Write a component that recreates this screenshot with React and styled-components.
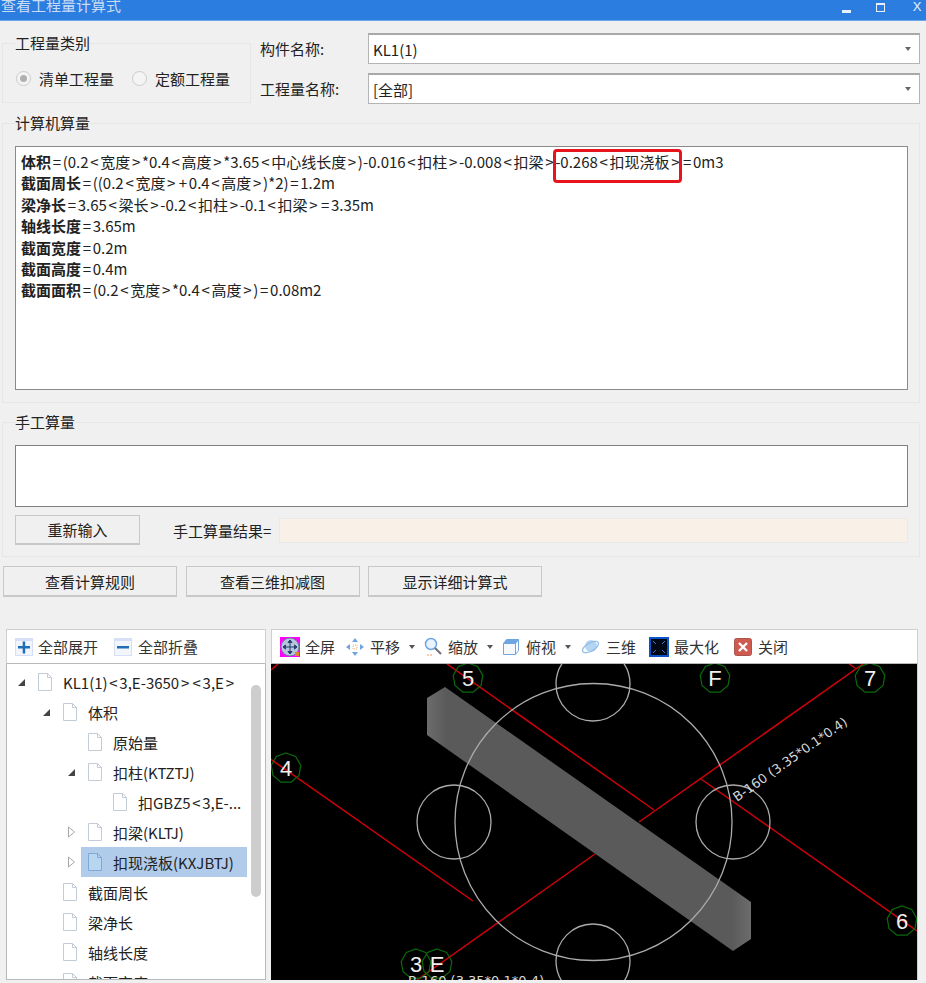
import styled, { createGlobalStyle } from "styled-components";

const GlobalStyle = createGlobalStyle`
html, body {
    margin: 0;
    padding: 0;
    background: #f0f0f0;
}
* {
    box-sizing: border-box;
}
`

const Window = styled.div`
width: 926px;
height: 983px;
overflow: hidden;
display: flex;
flex-direction: column;
background: #f0f0f0;
color: #222222;
font-family: "Noto Sans CJK SC", "Liberation Sans", sans-serif;
font-size: 15px;
`

const TitleBar = styled.div`
height: 21px;
flex: none;
display: flex;
align-items: center;
justify-content: space-between;
background: #2b7de0;
border-bottom: 1px solid #6aa6ea;
color: #c9dcf5;
overflow: hidden;
`

const TitleText = styled.span`
margin: -10px 0 0 1px;
font-size: 15px;
line-height: 20px;
`

const WinControls = styled.div`
display: flex;
align-items: center;
gap: 22px;
margin: -6px 3px 0 0;
`

const WinBtn = styled.span`
width: 12px;
display: flex;
justify-content: center;
margin-left: ${(p) => p.$shift ?? 0}px;
color: #e8f1fb;
font-family: "Liberation Sans", sans-serif;
font-size: 13px;
line-height: 14px;
`

const MinBar = styled.i`
width: 9px;
height: 3px;
margin-top: 9px;
background: #e8f1fb;
`

const MaxBox = styled.i`
width: 9px;
height: 9px;
border: 1px solid #e8f1fb;
border-top-width: 2px;
`

const TopRow = styled.div`
display: flex;
margin: 12px 0 0 2px;
gap: 9px;
`

const Group = styled.fieldset`
margin: ${(p) => p.$offset ?? 0}px 0 0 0;
min-width: 0;
width: ${(p) => p.$width}px;
height: ${(p) => p.$height}px;
padding: ${(p) => p.$top}px 11px 0 12px;
border: 1px solid #e6e6e6;
`

const Legend = styled.legend`
padding: 0;
margin-left: 0;
height: 20px;
line-height: 20px;
font-size: 15px;
`

const RadioRow = styled.div`
display: flex;
align-items: center;
margin-top: 15px;
white-space: nowrap;
`

const Radio = styled.span`
width: 15px;
height: 15px;
flex: none;
border-radius: 50%;
border: 1px solid #cccccc;
background: #f4f4f4;
display: flex;
align-items: center;
justify-content: center;
margin-left: ${(p) => p.$gap}px;
margin-right: 8px;
&::after {
    content: "";
    width: 7px;
    height: 7px;
    border-radius: 50%;
    background: ${(p) => (p.$on ? "#b0b0b0" : "transparent")};
}
`

const Form = styled.div`
flex: 1;
display: flex;
flex-direction: column;
gap: 9px;
margin-right: 6px;
`

const FormRow = styled.div`
display: flex;
align-items: center;
`

const FormLabel = styled.label`
width: 108px;
flex: none;
`

const Select = styled.div`
flex: 1;
height: 31px;
display: flex;
align-items: center;
justify-content: space-between;
padding: 0 8px 0 4px;
background: #ffffff;
border: 1px solid #b4b4b4;
border-top: 2px solid #a8a8a8;
&::after {
    content: "";
    border-left: 3px solid transparent;
    border-right: 3px solid transparent;
    border-top: 4px solid #666666;
}
`

const Stack = styled.div`
display: flex;
flex-direction: column;
margin-left: 2px;
`

const Formula = styled.div`
height: 244px;
padding: 4px 5px;
background: #ffffff;
border: 1px solid #8a8a8a;
line-height: 21.4px;
font-size: 15px;
white-space: nowrap;
b {
    font-weight: 700;
}
`

const Angle = styled.span`
padding: 0 1.7px;
`

const Mark = styled.span`
position: relative;
&::after {
    content: "";
    position: absolute;
    left: -2px;
    right: -1px;
    top: -2px;
    bottom: -11px;
    border: 3px solid #e8141c;
    border-radius: 4px;
}
`

const ManualBox = styled.div`
height: 62px;
background: #ffffff;
border: 1px solid #808080;
`

const ManualRow = styled.div`
display: flex;
align-items: center;
margin-top: 8px;
`

const Button = styled.button`
width: ${(p) => p.$width}px;
height: ${(p) => p.$height}px;
flex: none;
padding: 0;
background: #f0f0f0;
border: 1px solid #c8c8c8;
border-bottom-width: 2px;
color: #222222;
font: inherit;
`

const ResultLabel = styled.span`
margin: 0 8px 0 33px;
white-space: nowrap;
`

const ResultField = styled.div`
flex: 1;
height: 25px;
background: #f9f0e7;
border: 1px solid #e9e9e9;
`

const ActionRow = styled.div`
display: flex;
gap: 8.5px;
margin: 9px 0 0 3px;
`

const Lower = styled.div`
display: flex;
gap: 5px;
margin: 32px 0 0 6px;
height: 351px;
`

const Panel = styled.div`
width: ${(p) => p.$width}px;
flex: none;
display: flex;
flex-direction: column;
`

const Toolbar = styled.div`
height: 35px;
flex: none;
display: flex;
align-items: center;
padding-left: ${(p) => p.$pad}px;
background: #ffffff;
border: 1px solid #d0d0d0;
border-bottom-color: #b8b8b8;
`

const ToolItem = styled.span`
display: flex;
align-items: center;
gap: ${(p) => p.$gap ?? 6}px;
margin-right: ${(p) => p.$after ?? 11}px;
color: #333333;
white-space: nowrap;
`

const Caret = styled.i`
width: 0;
height: 0;
margin-left: 3px;
border-left: 3px solid transparent;
border-right: 3px solid transparent;
border-top: 4px solid #555555;
`

const Tree = styled.div`
position: relative;
flex: 1;
overflow: hidden;
padding-top: 3px;
background: #ffffff;
border: 1px solid #b8b8b8;
border-top: 0;
`

const Row = styled.div`
height: 30px;
display: flex;
align-items: center;
margin-left: ${(p) => 4 + p.$depth * 25}px;
margin-right: 18px;
`

const Toggle = styled.span`
width: 20px;
flex: none;
display: flex;
justify-content: center;
`

const RowBody = styled.div`
flex: 1;
height: 100%;
min-width: 0;
display: flex;
align-items: center;
gap: 10px;
padding-left: 6px;
background: ${(p) => (p.$selected ? "#b1cceb" : "transparent")};
white-space: nowrap;
`

const ScrollThumb = styled.div`
position: absolute;
top: 21px;
right: 4px;
width: 10px;
height: 212px;
border-radius: 5px;
background: #cdcdcd;
`

const Canvas = styled.div`
flex: 1;
background: #000000;
overflow: hidden;
border-right: 1px solid #d0d0d0;
svg {
    display: block;
}
`

function FileIcon({ selected }) {
    return (
        <svg width="16" height="20" viewBox="0 0 16 20" style={{ flex: "none" }}>
            <path d="M1.5 1.5h9l4 4v13h-13z" fill={selected ? "#b9d6f0" : "#ffffff"} stroke={selected ? "#7fa9d3" : "#c3ccd6"} />
            <path d="M10.5 1.5v4h4" fill="none" stroke={selected ? "#7fa9d3" : "#c3ccd6"} />
        </svg>
    )
}

function TreeToggle({ kind }) {
    if (kind === "open") {
        return <svg width="9" height="9" viewBox="0 0 9 9"><path d="M8 1v7H1z" fill="#444444" /></svg>
    }
    if (kind === "closed") {
        return <svg width="9" height="12" viewBox="0 0 9 12"><path d="M1.5 1l6 5-6 5z" fill="#ffffff" stroke="#a8a8a8" /></svg>
    }
    return null
}

function PlusIcon({ minus }) {
    return (
        <svg width="18" height="18" viewBox="0 0 18 18">
            <rect width="18" height="18" fill="#d6dff5" />
            <rect x="1" y="3" width="16" height="14" fill="#f2f5fc" />
            <rect x="3" y="8" width="12" height="2.5" fill="#1f6fb8" />
            {!minus && <rect x="7.7" y="3.5" width="2.5" height="12" fill="#1f6fb8" />}
        </svg>
    )
}

function FullIcon() {
    return (
        <svg width="20" height="20" viewBox="0 0 20 20">
            <rect width="20" height="20" fill="#ff00ff" />
            <circle cx="10" cy="10" r="9" fill="#b7c6dc" stroke="#6c7f9c" />
            <path d="M10 3v14M3 10h14M10 3l-2 2.5h4zM10 17l-2-2.5h4zM3 10l2.5-2v4zM17 10l-2.5-2v4z" stroke="#24406b" fill="#24406b" strokeWidth="1" />
            <rect x="15" y="15" width="4" height="4" fill="#d98a2b" />
        </svg>
    )
}

function MoveIcon() {
    return (
        <svg width="18" height="18" viewBox="0 0 18 18" fill="#6ea6e2">
            <path d="M9 0l3 4H6zM9 18l-3-4h6zM0 9l4-3v6zM18 9l-4 3V6z" />
            <rect x="7" y="7" width="4" height="4" fill="#fff" stroke="#e8b27a" strokeDasharray="1 1" />
        </svg>
    )
}

function ZoomIcon() {
    return (
        <svg width="18" height="20" viewBox="0 0 18 20" fill="none">
            <circle cx="7" cy="7" r="5.5" fill="#e8f3fc" stroke="#6ea6e2" strokeWidth="1.5" />
            <path d="M11 11l6 6" stroke="#6d6d6d" strokeWidth="2" />
            <path d="M3 18h6" stroke="#e89a6a" strokeDasharray="2 1" />
        </svg>
    )
}

function CubeIcon() {
    return (
        <svg width="18" height="18" viewBox="0 0 18 18" fill="none" stroke="#6ea6e2">
            <path d="M1.5 5.5h12v11h-12z" fill="#f5f9fd" />
            <path d="M1.5 5.5l3-4h12l-3 4z" fill="#6ea6e2" />
            <path d="M13.5 16.5l3-4v-11" />
        </svg>
    )
}

function OrbitIcon() {
    return (
        <svg width="19" height="18" viewBox="0 0 19 18">
            <circle cx="10" cy="8" r="6" fill="#b6d5f3" />
            <ellipse cx="9.5" cy="9" rx="9" ry="4" fill="none" stroke="#8fbce8" strokeWidth="1.3" transform="rotate(-30 9.5 9)" />
        </svg>
    )
}

function MaxIcon() {
    return (
        <svg width="20" height="20" viewBox="0 0 20 20">
            <rect x="1" y="1" width="18" height="18" fill="#000814" stroke="#0a54c8" strokeWidth="2" />
            <path d="M4 4l3 3M16 4l-3 3M4 16l3-3M16 16l-3-3" stroke="#2a7fe0" />
        </svg>
    )
}

function CloseIcon() {
    return (
        <svg width="18" height="18" viewBox="0 0 18 18">
            <rect x=".5" y=".5" width="17" height="17" rx="2" fill="#cf5a50" stroke="#a8554d" />
            <path d="M5 5l8 8M13 5l-8 8" stroke="#ffffff" strokeWidth="2.4" />
        </svg>
    )
}

function nonagon(cx, cy, r) {
    const pts = []
    for (let i = 0; i < 9; i++) {
        const a = (i / 9) * Math.PI * 2 - Math.PI / 2
        pts.push(`${(cx + r * Math.cos(a)).toFixed(1)},${(cy + r * Math.sin(a)).toFixed(1)}`)
    }
    return pts.join(" ")
}

// wide < > = + like the original font
function spaced(text) {
    return text.split(/([<>=+])/).map((part, i) =>
        /^[<>=+]$/.test(part) ? <Angle key={i}>{part}</Angle> : part
    )
}

const redLines = [
    [272, 670, 279, 664],
    [448, 664, 655, 810],
    [270, 758, 474, 901],
    [418, 980, 596, 854],
    [640, 822, 864, 664],
    [702, 779, 918, 931],
    [850, 664, 856, 668],
]

const grayCircles = [
    [594, 684, 37],
    [455, 822, 37],
    [734, 822, 37],
    [594, 961, 37],
    [594.5, 822, 138.5],
]

const axisMarks = [
    ["5", 469, 678],
    ["F", 716, 678],
    ["7", 871, 678],
    ["4", 287, 768],
    ["6", 903, 921],
    ["3", 417, 964],
    ["E", 438, 964],
]

function Drawing() {
    return (
        <svg width="646" height="316" viewBox="272 664 646 316">
            <defs>
                <linearGradient id="beam" gradientUnits="userSpaceOnUse" x1="428" y1="0" x2="752" y2="0">
                    <stop offset="0" stopColor="#6c6c6c" />
                    <stop offset="0.06" stopColor="#5a5a5a" />
                    <stop offset="0.94" stopColor="#5a5a5a" />
                    <stop offset="1" stopColor="#6c6c6c" />
                </linearGradient>
            </defs>
            {redLines.map((l, i) => (
                <line key={i} x1={l[0]} y1={l[1]} x2={l[2]} y2={l[3]} stroke="#d0000a" strokeWidth="1.5" />
            ))}
            <polygon points="446,687 428,698 428,735 734,951 752,939 752,902" fill="url(#beam)" />
            {grayCircles.map((c, i) => (
                <circle key={i} cx={c[0]} cy={c[1]} r={c[2]} fill="none" stroke="#ababab" strokeWidth="1.3" />
            ))}
            {axisMarks.map(([label, x, y]) => (
                <g key={label}>
                    <polygon points={nonagon(x, y, 15)} fill="none" stroke="#0b6b0b" strokeWidth="1.2" />
                    <text x={x} y={y + 8} textAnchor="middle" fill="#f0f0f0" fontFamily="Liberation Sans, sans-serif" fontSize="22">{label}</text>
                </g>
            ))}
            <text x="738" y="802" transform="rotate(-35 738 802)" fill="#d8d8d8" fontFamily="DejaVu Sans, sans-serif" fontSize="13">B-160 (3.35*0.1*0.4)</text>
            <text x="409" y="985" fill="#d8d8d8" fontFamily="DejaVu Sans, sans-serif" fontSize="13">B-160 (3.35*0.1*0.4)</text>
        </svg>
    )
}

const formulaLines = [
    ["截面周长", "=((0.2<宽度>+0.4<高度>)*2)=1.2m"],
    ["梁净长", "=3.65<梁长>-0.2<扣柱>-0.1<扣梁>=3.35m"],
    ["轴线长度", "=3.65m"],
    ["截面宽度", "=0.2m"],
    ["截面高度", "=0.4m"],
    ["截面面积", "=(0.2<宽度>*0.4<高度>)=0.08m2"],
]

const treeRows = [
    { depth: 0, toggle: "open", label: "KL1(1)<3,E-3650><3,E>" },
    { depth: 1, toggle: "open", label: "体积" },
    { depth: 2, label: "原始量" },
    { depth: 2, toggle: "open", label: "扣柱(KTZTJ)" },
    { depth: 3, label: "扣GBZ5<3,E-..." },
    { depth: 2, toggle: "closed", label: "扣梁(KLTJ)" },
    { depth: 2, toggle: "closed", label: "扣现浇板(KXJBTJ)", selected: true },
    { depth: 1, label: "截面周长" },
    { depth: 1, label: "梁净长" },
    { depth: 1, label: "轴线长度" },
    { depth: 1, label: "截面宽度" },
]

export default function App() {
    return (
        <Window>
            <GlobalStyle />
            <TitleBar>
                <TitleText>查看工程量计算式</TitleText>
                <WinControls>
                    <WinBtn><MinBar /></WinBtn>
                    <WinBtn><MaxBox /></WinBtn>
                    <WinBtn $shift={3}>X</WinBtn>
                </WinControls>
            </TitleBar>

            <TopRow>
                <Group $width={249} $height={70} $top={0}>
                    <Legend>工程量类别</Legend>
                    <RadioRow>
                        <Radio $on $gap={1} />清单工程量
                        <Radio $gap={18} />定额工程量
                    </RadioRow>
                </Group>
                <Form>
                    <FormRow>
                        <FormLabel>构件名称:</FormLabel>
                        <Select>KL1(1)</Select>
                    </FormRow>
                    <FormRow>
                        <FormLabel>工程量名称:</FormLabel>
                        <Select>[全部]</Select>
                    </FormRow>
                </Form>
            </TopRow>

            <Stack>
                <Group $width={918} $height={290} $top={13} $offset={9}>
                    <Legend>计算机算量</Legend>
                    <Formula>
                        <div><b>体积</b>{spaced("=(0.2<宽度>*0.4<高度>*3.65<中心线长度>)-0.016<扣柱>-0.008<扣梁>")}<Mark>{spaced("-0.268<扣现浇板>")}</Mark>{spaced("=0m3")}</div>
                        {formulaLines.map(([name, rest]) => (
                            <div key={name}><b>{name}</b>{spaced(rest)}</div>
                        ))}
                    </Formula>
                </Group>

                <Group $width={918} $height={145} $top={13} $offset={9}>
                    <Legend>手工算量</Legend>
                    <ManualBox />
                    <ManualRow>
                        <Button $width={125} $height={30}>重新输入</Button>
                        <ResultLabel>手工算量结果=</ResultLabel>
                        <ResultField />
                    </ManualRow>
                </Group>
            </Stack>

            <ActionRow>
                <Button $width={174} $height={31}>查看计算规则</Button>
                <Button $width={174} $height={31}>查看三维扣减图</Button>
                <Button $width={174} $height={31}>显示详细计算式</Button>
            </ActionRow>

            <Lower>
                <Panel $width={260}>
                    <Toolbar $pad={8}>
                        <ToolItem $gap={5} $after={16}><PlusIcon />全部展开</ToolItem>
                        <ToolItem $after={0}><PlusIcon minus />全部折叠</ToolItem>
                    </Toolbar>
                    <Tree>
                        {treeRows.map((r) => (
                            <Row key={r.label} $depth={r.depth}>
                                <Toggle><TreeToggle kind={r.toggle} /></Toggle>
                                <RowBody $selected={r.selected}>
                                    <FileIcon selected={r.selected} />
                                    <span>{r.label.startsWith("KL1") || r.label.includes("GBZ5") ? spaced(r.label) : r.label}</span>
                                </RowBody>
                            </Row>
                        ))}
                        <ScrollThumb />
                    </Tree>
                </Panel>
                <Panel $width={647}>
                    <Toolbar $pad={8}>
                        <ToolItem $gap={5}><FullIcon />全屏</ToolItem>
                        <ToolItem $after={9}><MoveIcon />平移<Caret /></ToolItem>
                        <ToolItem $after={9}><ZoomIcon />缩放<Caret /></ToolItem>
                        <ToolItem $after={10}><CubeIcon />俯视<Caret /></ToolItem>
                        <ToolItem $after={13}><OrbitIcon />三维</ToolItem>
                        <ToolItem $gap={5} $after={15}><MaxIcon />最大化</ToolItem>
                        <ToolItem $after={0}><CloseIcon />关闭</ToolItem>
                    </Toolbar>
                    <Canvas><Drawing /></Canvas>
                </Panel>
            </Lower>
        </Window>
    )
}
